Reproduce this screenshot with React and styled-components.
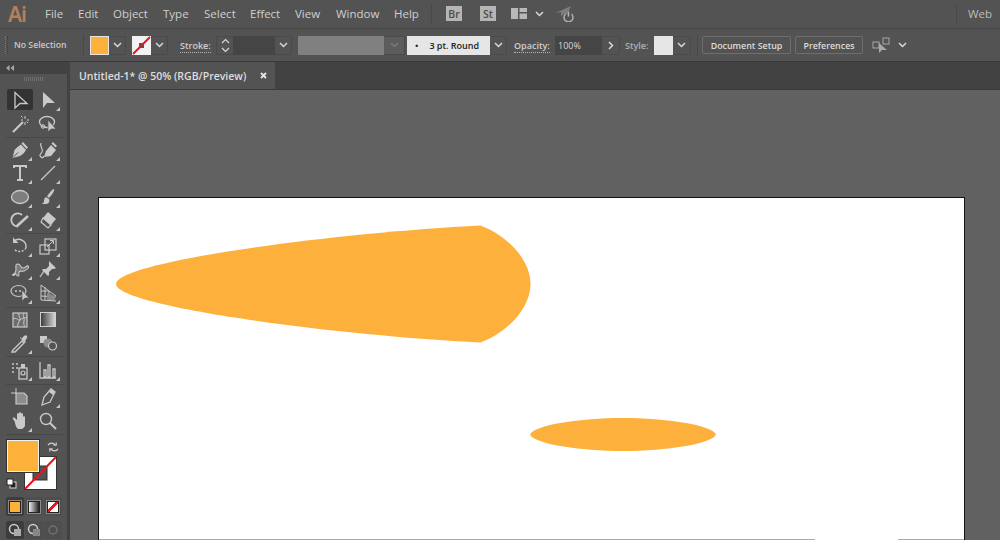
import styled, { createGlobalStyle } from 'styled-components';

const GlobalStyle = createGlobalStyle`
	html, body {
		margin: 0;
		height: 100%;
		overflow: hidden;
		background: #616161;
	}
	* {
		box-sizing: border-box;
	}
`;

const Page = styled.div`
	width: 1000px;
	height: 540px;
	display: flex;
	flex-direction: column;
	overflow: hidden;
	font-family: 'Open Sans', 'Noto Sans', sans-serif;
	color: #d6d6d6;
`;

const MenuBar = styled.div`
	height: 29px;
	flex: none;
	display: flex;
	align-items: center;
	padding-bottom: 1px;
	background: #535353;
	border-bottom: 1px solid #454545;
`;

const Logo = styled.div`
	width: 45px;
	padding-left: 8px;
	font-family: 'Noto Sans', sans-serif;
	font-size: 21px;
	font-weight: 600;
	letter-spacing: -1px;
	color: #b4805a;
`;

const MenuItem = styled.div`
	width: ${(p) => p.$w}px;
	font-size: 11.5px;
	color: #cfcfcf;
`;

const MenuSep = styled.div`
	width: 1px;
	height: 20px;
	background: #484848;
	margin: 0 ${(p) => p.$right}px 0 ${(p) => p.$left}px;
`;

const Badge = styled.div`
	width: 16px;
	height: 15px;
	margin-right: ${(p) => p.$mr}px;
	display: flex;
	align-items: center;
	justify-content: center;
	background: #b5b5b5;
	color: #4c4c4c;
	font-size: 10.5px;
	font-weight: 600;
`;

const Gap = styled.span`
	width: ${(p) => p.$w}px;
	flex: none;
`;

const Spacer = styled.div`
	flex: 1;
`;

const WebLabel = styled.div`
	width: 43px;
	padding-left: 11px;
	font-size: 11.5px;
	color: #bdbdbd;
`;

const ControlBar = styled.div`
	height: 33px;
	flex: none;
	display: flex;
	align-items: center;
	background: #535353;
	border-bottom: 1px solid #3a3a3a;
`;

const Grip = styled.div`
	width: 3px;
	height: 18px;
	margin: 0 6px 0 5px;
	border-left: 1px dotted #777;
	border-right: 1px dotted #3d3d3d;
`;

const NoSelection = styled.div`
	width: 69px;
	font-size: 8.7px;
	font-weight: 600;
	color: #c8c8c8;
`;

const BarSep = styled.div`
	width: 1px;
	height: 22px;
	background: #484848;
	margin: 0 ${(p) => p.$right}px 0 ${(p) => p.$left}px;
`;

const Swatch = styled.div`
	width: 19px;
	height: 19px;
	flex: none;
	border: 1px solid #e6e6e6;
	background: ${(p) => p.$color};
`;

const ChevronBox = styled.div`
	width: ${(p) => p.$w || 17}px;
	height: 19px;
	flex: none;
	display: flex;
	align-items: center;
	justify-content: center;
	border: 1px solid #4a4a4a;
	border-left: none;
	border-radius: 0 2px 2px 0;
	background: ${(p) => p.$bg || '#535353'};
	margin-right: ${(p) => p.$mr || 0}px;
`;

const Label = styled.div`
	width: ${(p) => p.$w}px;
	margin-left: ${(p) => p.$ml}px;
	font-size: 9px;
	font-weight: 600;
	color: ${(p) => (p.$dim ? '#b0b0b0' : '#d0d0d0')};
	span {
		border-bottom: ${(p) => (p.$dim ? 'none' : '1px dotted #b5b5b5')};
	}
`;

const Spinner = styled.div`
	width: 17px;
	height: 19px;
	flex: none;
	display: flex;
	align-items: center;
	justify-content: center;
	border: 1px solid #4a4a4a;
	border-right: none;
`;

const DarkField = styled.div`
	width: ${(p) => p.$w}px;
	height: 19px;
	flex: none;
	padding-left: 3px;
	display: flex;
	align-items: center;
	background: #454545;
	font-size: 9px;
	color: #d8d8d8;
`;

const GrayBar = styled.div`
	width: 86px;
	height: 19px;
	flex: none;
	margin-left: 6px;
	background: #808080;
`;

const BrushField = styled.div`
	width: 83px;
	height: 19px;
	flex: none;
	display: flex;
	align-items: center;
	background: #e6e6e6;
	color: #222;
	font-size: 9px;
	font-weight: 600;
	padding-left: 8px;
	gap: 11px;
`;

const BarButton = styled.div`
	height: 18px;
	width: ${(p) => p.$w}px;
	margin-right: 4px;
	flex: none;
	display: flex;
	align-items: center;
	justify-content: center;
	border: 1px solid #6e6e6e;
	border-radius: 2px;
	font-size: 8.9px;
	font-weight: 600;
	color: #dcdcdc;
`;

const Workspace = styled.div`
	flex: 1;
	display: flex;
	min-height: 0;
`;

const ToolPanel = styled.div`
	width: 70px;
	flex: none;
	display: flex;
	flex-direction: column;
	background: #535353;
	border-right: 3px solid #424242;
`;

const PanelHead = styled.div`
	height: 12px;
	flex: none;
	padding-left: 6px;
	display: flex;
	align-items: center;
	background: #424242;
`;

const PanelGrip = styled.div`
	width: 20px;
	height: 4px;
	flex: none;
	margin: 3px 0 7px 24px;
	background: repeating-linear-gradient(90deg, #6f6f6f 0 1px, transparent 1px 2px);
`;

const ToolGroup = styled.div`
	display: grid;
	grid-template-columns: 28px 28px;
	grid-auto-rows: ${(p) => p.$row}px;
	width: 57px;
	margin-left: 6px;
	padding-bottom: ${(p) => p.$pb}px;
	border-bottom: 1px solid #484848;
	flex: none;
`;

const ToolCell = styled.div`
	position: relative;
	display: flex;
	align-items: center;
	justify-content: center;
	border-radius: 2px;
	margin: ${(p) => (p.$active ? '1px 1px 2px' : '0')};
	background: ${(p) => (p.$active ? '#333' : 'transparent')};
	&::after {
		content: '';
		display: ${(p) => (p.$more ? 'block' : 'none')};
		position: absolute;
		right: 2px;
		bottom: 1px;
		border-style: solid;
		border-width: 0 0 4px 4px;
		border-color: transparent transparent #c4c4c4 transparent;
	}
`;

const ColorWell = styled.div`
	position: relative;
	height: 57px;
	flex: none;
	margin-top: 5px;
`;

const FillSquare = styled.div`
	position: absolute;
	left: 7px;
	top: 0;
	width: 32px;
	height: 32px;
	background: #fcb13b;
	border: 1px solid #f0f0f0;
	box-shadow: 0 0 0 1px #333;
	z-index: 1;
`;

const StrokeSquare = styled.svg`
	position: absolute;
	left: 24px;
	top: 16px;
`;

const WellIcon = styled.svg`
	position: absolute;
	left: ${(p) => p.$x}px;
	top: ${(p) => p.$y}px;
`;

const ModeRow = styled.div`
	display: flex;
	flex: none;
	margin: 0 0 5px 6px;
	gap: 1px;
`;

const ModeCell = styled.div`
	width: 18px;
	height: ${(p) => p.$h || 19}px;
	display: flex;
	align-items: center;
	justify-content: center;
	border-radius: 2px;
	background: ${(p) => (p.$active ? '#3c3c3c' : '#4e4e4e')};
`;

const ModeSwatch = styled.div`
	width: 12px;
	height: 12px;
	border: 1px solid #222;
	outline: 1px solid #8a8a8a;
	background: ${(p) => p.$bg};
`;

const Main = styled.div`
	flex: 1;
	display: flex;
	flex-direction: column;
	min-width: 0;
`;

const TabStrip = styled.div`
	height: 28px;
	flex: none;
	display: flex;
	background: #424242;
	border-bottom: 1px solid #3a3a3a;
`;

const Tab = styled.div`
	width: 205px;
	display: flex;
	align-items: center;
	justify-content: space-between;
	padding: 0 8px 0 9px;
	background: #535353;
	font-size: 10.5px;
	font-weight: 600;
	color: #dedede;
`;

const Canvas = styled.div`
	flex: 1;
	padding: 107px 0 0 28px;
	background: #616161;
	min-height: 0;
`;

const Artboard = styled.div`
	width: 867px;
	height: 344px;
	background: #fff;
	border: 1px solid #111;
	border-bottom: none;
`;

const ArtSvg = styled.svg`
	display: block;
`;

const Chevron = ({ color = '#d8d8d8' }) => (
	<svg width="9" height="6" viewBox="0 0 9 6">
		<path d="M1 1l3.5 3.5L8 1" fill="none" stroke={color} strokeWidth="1.5" />
	</svg>
);

const NoneSwatch = () => (
	<svg width="19" height="19" viewBox="0 0 19 19">
		<rect width="19" height="19" fill="#f2f2f2" />
		<rect x="7" y="7" width="5" height="5" fill="#555" />
		<path d="M1 18L18 1" stroke="#e8141c" strokeWidth="2" />
	</svg>
);

const tools = {
	select: <path d="M5 2.5V18l5-4.5h7z" fill="none" strokeWidth="1.3" />,
	direct: <path d="M5 2v16l4-5h8z" fill="currentColor" stroke="none" />,
	wand: (
		<>
			<path d="M3 18L13 8" strokeWidth="2.2" />
			<path d="M15 2v3M15 8v3M11 6h2M17 6h2M11 2l1.5 1.5M18 9l-1.5-1.5" strokeWidth="1" />
		</>
	),
	lasso: (
		<>
			<ellipse cx="9" cy="8" rx="7.5" ry="5.5" fill="none" strokeWidth="1.3" />
			<circle cx="5" cy="12.5" r="1.8" fill="none" strokeWidth="1" />
			<path d="M10 6v12l3-3h5z" fill="currentColor" stroke="#535353" strokeWidth=".7" />
		</>
	),
	pen: (
		<>
			<path d="M2.5 18l2-8c2-2 4-4 6.500-5.500l5 5.500C14.500 12.500 12.500 14.500 10 16z" fill="currentColor" stroke="none" />
			<path d="M13 2l5 5.500-1.500 1.500-5-5.500z" fill="currentColor" stroke="none" />
			<path d="M3 17.500l5-5" stroke="#535353" strokeWidth="1" />
		</>
	),
	curvature: (
		<>
			<path d="M6 17l2-6 5-6 5 5-5 6z" fill="currentColor" stroke="none" />
			<path d="M15 2l4 4-1.500 1.500-4-4z" fill="currentColor" stroke="none" />
			<path d="M3 3c-2 3 3 6 1 9s-3 3-1 5 3-1 3-1" fill="none" strokeWidth="1.2" />
		</>
	),
	type: <path d="M4 5V3h12v2M10 3v14M7 17h6" fill="none" strokeWidth="2" />,
	line: <path d="M3 17L17 3" strokeWidth="1.3" />,
	ellipse: <ellipse cx="10" cy="10" rx="8.5" ry="6.5" fill="#7e7e7e" strokeWidth="1.3" />,
	brush: (
		<>
			<path d="M16 2c1 2-3 7-5 9l-2-2c2-2 5-7 7-7z" fill="currentColor" stroke="none" />
			<path d="M8 10c-2 1-2 3-2 5l-2 2h4c3 0 4-3 3-5z" fill="currentColor" stroke="none" />
		</>
	),
	shaper: (
		<>
			<path d="M12 5A6.5 6.5 0 1 0 8 16.5" fill="none" strokeWidth="1.8" />
			<path d="M7 16L18 6" strokeWidth="2.5" />
		</>
	),
	eraser: (
		<>
			<path d="M10 2l8 7-5 6-8-7z" fill="currentColor" stroke="none" />
			<path d="M5 8l8 7-3 3-7-6z" fill="none" strokeWidth="1.2" />
		</>
	),
	rotate: (
		<>
			<path d="M4 5a7.500 7.500 0 0 1 12 7" fill="none" strokeWidth="1.4" />
			<path d="M16 12a7.500 7.500 0 0 1-12 1" fill="none" strokeWidth="1.4" strokeDasharray="2 1.500" />
			<path d="M3 1.500V7h5.500z" fill="currentColor" stroke="none" />
		</>
	),
	scale: (
		<>
			<rect x="2" y="9" width="9" height="9" fill="none" strokeWidth="1.2" />
			<rect x="7" y="3" width="11" height="11" fill="none" strokeWidth="1.2" />
			<path d="M9 11l6-6M12 4.5h3.5V8" fill="none" strokeWidth="1" />
		</>
	),
	warp: (
		<path d="M2 16c3-1 4-3 4-6S5 5 8 5s2 4 5 4 3-3 5-2-1 4-4 5-4-1-5 1 1 4-1 4-2-3-3-2-1 2-2 1z" fill="#7a7a7a" strokeWidth="1.1" />
	),
	pin: (
		<>
			<path d="M11 2l7 7-2 1-2 0-3 3 0 3-1 1-6-6 1-1 3 0 3-3 0-2z" fill="currentColor" stroke="none" />
			<path d="M6 12l-4 6" strokeWidth="1.3" />
		</>
	),
	shape: (
		<>
			<ellipse cx="8.5" cy="8" rx="7.5" ry="5.5" fill="none" strokeWidth="1.2" />
			<circle cx="6" cy="8" r="1" fill="currentColor" stroke="none" />
			<circle cx="10" cy="8" r="1" fill="currentColor" stroke="none" />
			<path d="M12 7v11l3-3h4z" fill="currentColor" stroke="#535353" strokeWidth=".7" />
		</>
	),
	perspective: (
		<>
			<path d="M3 2v15l15 1M3 2l8 6 7 5M3 8h8v7M3 13l15 1M7 4v13" fill="none" strokeWidth="1" />
			<path d="M9 10l8 3v4H9z" fill="#8a8a8a" stroke="none" />
		</>
	),
	mesh: (
		<>
			<rect x="3" y="3" width="14" height="14" fill="#6d6d6d" strokeWidth="1.2" />
			<path d="M3 9c4-2 5 2 7 1s4-3 7-2M9 3c-1 4 2 5 1 7s-3 4-2 7M14 3c-2 4 1 5 0 8s1 4 0 6" fill="none" strokeWidth="1" />
		</>
	),
	gradient: null,
	eyedropper: (
		<>
			<path d="M3 17l9-9 2 2-9 9-3 0z" fill="none" strokeWidth="1.4" />
			<path d="M11 6l3-3c2-2 4 0 3 2l-2 3 1 1-1 1-5-5 1-1z" fill="currentColor" stroke="none" />
		</>
	),
	blend: (
		<>
			<rect x="2" y="3" width="7" height="7" fill="currentColor" stroke="none" />
			<circle cx="10" cy="10" r="4.5" fill="#8c8c8c" stroke="none" />
			<circle cx="14.5" cy="13" r="4" fill="#535353" strokeWidth="1.2" />
		</>
	),
	spray: (
		<>
			<rect x="9" y="8" width="8" height="11" fill="none" strokeWidth="1.3" />
			<rect x="11" y="4" width="4" height="4" fill="currentColor" stroke="none" />
			<circle cx="13" cy="13" r="2" fill="none" strokeWidth="1.2" />
			<path d="M2 4h2M6 4h2M2 8h2M6 8h2M2 12h2" strokeWidth="1.5" />
		</>
	),
	graph: <path d="M2 2v16h16M6 17v-7M6 17h2v-7H6zM10 17V5h2v12zM15 17V9h2v8z" fill="none" strokeWidth="1.3" />,
	artboard: (
		<>
			<path d="M6 1v5M1 6h5" strokeWidth="1" />
			<path d="M6 6h8l3 3v8H6z" fill="#8c8c8c" strokeWidth="1.2" />
		</>
	),
	slice: (
		<>
			<path d="M4 18l2-8 7-8 4 3-5 10z" fill="none" strokeWidth="1.3" />
			<path d="M13 2l4 3-2 3-4-3z" fill="currentColor" stroke="none" />
		</>
	),
	hand: (
		<path d="M5 11L3 8c-1-1 1-2 2-1l2 2V3c0-1 2-1 2 0v5V2c0-1 2-1 2 0v6-5c0-1 2-1 2 0v6-3c0-1 2-1 2 0v8c0 2-2 4-4 4H9c-2 0-3-2-4-6z" fill="currentColor" stroke="none" />
	),
	zoom: (
		<>
			<circle cx="8" cy="8" r="5.5" fill="none" strokeWidth="1.4" />
			<path d="M12 12l6 6" strokeWidth="2" />
		</>
	),
};

const Gradient = styled.div`
	width: 16px;
	height: 15px;
	border: 1px solid #cfcfcf;
	background: linear-gradient(90deg, #3d3d3d, #d5d5d5);
`;

const Tool = ({ name, more, active }) => (
	<ToolCell $more={more} $active={active}>
		{name === 'gradient' ? (
			<Gradient />
		) : (
			<svg width="20" height="20" viewBox="0 0 20 20" stroke="currentColor" color="#c9c9c9">
				{tools[name]}
			</svg>
		)}
	</ToolCell>
);

const toolGroups = [
	{ row: 24, pb: 1, tools: [['select', false, true], ['direct', true], ['wand'], ['lasso']] },
	{
		row: 23.5,
		pb: 1,
		tools: [['pen', true], ['curvature', true], ['type', true], ['line', true], ['ellipse', true], ['brush', true], ['shaper', true], ['eraser', true]],
	},
	{ row: 23.5, pb: 2.5, tools: [['rotate', true], ['scale', true], ['warp', true], ['pin', true], ['shape', true], ['perspective', true]] },
	{ row: 23.5, pb: 1, tools: [['mesh'], ['gradient'], ['eyedropper', true], ['blend']] },
	{ row: 25, pb: 2, tools: [['spray', true], ['graph', true]] },
	{ row: 24, pb: 1, tools: [['artboard'], ['slice', true], ['hand', true], ['zoom']] },
];

const menus = [
	['File', 33],
	['Edit', 35],
	['Object', 50],
	['Type', 41],
	['Select', 46],
	['Effect', 45],
	['View', 41],
	['Window', 58],
	['Help', 37],
];

export default function App() {
	return (
		<Page>
			<GlobalStyle />
			<MenuBar>
				<Logo>Ai</Logo>
				{menus.map(([name, w]) => (
					<MenuItem key={name} $w={w}>
						{name}
					</MenuItem>
				))}
				<MenuSep $left={0} $right={14} />
				<Badge $mr={18}>Br</Badge>
				<Badge $mr={15}>St</Badge>
				<svg width="16" height="11" viewBox="0 0 16 11">
					<rect width="7" height="11" fill="#b8b8b8" />
					<rect x="8.5" width="7.5" height="4" fill="#b8b8b8" />
					<rect x="8.5" y="5.5" width="7.5" height="5.5" fill="#b8b8b8" />
				</svg>
				<Gap $w={8} />
				<Chevron />
				<Gap $w={11} />
				<svg width="21" height="16" viewBox="0 0 21 16">
					<path d="M0 7L16 0l-4 9-3-1.5-3 3V6z" fill="#7d7d7d" />
					<path d="M10.5 8a4.5 4.5 0 1 0 6 0" fill="none" stroke="#b5b5b5" strokeWidth="1.4" />
					<path d="M13.5 5.500v5" stroke="#b5b5b5" strokeWidth="1.4" />
				</svg>
				<Spacer />
				<MenuSep $left={0} $right={0} />
				<WebLabel>Web</WebLabel>
			</MenuBar>
			<ControlBar>
				<Grip />
				<NoSelection>No Selection</NoSelection>
				<BarSep $left={0} $right={6} />
				<Swatch $color="#fcb13b" />
				<ChevronBox>
					<Chevron />
				</ChevronBox>
				<Gap $w={6} />
				<NoneSwatch />
				<ChevronBox>
					<Chevron />
				</ChevronBox>
				<Label $ml={12} $w={36}>
					<span>Stroke:</span>
				</Label>
				<Spinner>
					<svg width="9" height="15" viewBox="0 0 9 15">
						<path d="M1 5l3.5-3.5L8 5M1 10l3.5 3.5L8 10" fill="none" stroke="#d8d8d8" strokeWidth="1.2" />
					</svg>
				</Spinner>
				<DarkField $w={42} />
				<ChevronBox>
					<Chevron />
				</ChevronBox>
				<GrayBar />
				<ChevronBox $w={21} $bg="#5c5c5c" $mr={2}>
					<Chevron color="#777" />
				</ChevronBox>
				<BrushField>
					<span>•</span>
					<span>3 pt. Round</span>
				</BrushField>
				<ChevronBox>
					<Chevron />
				</ChevronBox>
				<Label $ml={7} $w={41}>
					<span>Opacity:</span>
				</Label>
				<DarkField $w={47}>100%</DarkField>
				<ChevronBox $w={18}>
					<svg width="6" height="9" viewBox="0 0 6 9">
						<path d="M1 1l3.5 3.5L1 8" fill="none" stroke="#d8d8d8" strokeWidth="1.5" />
					</svg>
				</ChevronBox>
				<Label $ml={5} $w={29} $dim>
					Style:
				</Label>
				<Swatch $color="#e6e6e6" />
				<ChevronBox $w={18}>
					<Chevron />
				</ChevronBox>
				<BarSep $left={6} $right={4} />
				<BarButton $w={89}>Document Setup</BarButton>
				<BarButton $w={68}>Preferences</BarButton>
				<Gap $w={5} />
				<svg width="20" height="17" viewBox="0 0 20 17">
					<rect x="1" y="5" width="6" height="6" fill="none" stroke="#a8a8a8" />
					<rect x="11" y="1" width="6" height="6" fill="none" stroke="#a8a8a8" />
					<path d="M7 6v10l3-3h5z" fill="#a8a8a8" />
				</svg>
				<Gap $w={6} />
				<Chevron />
			</ControlBar>
			<Workspace>
				<ToolPanel>
					<PanelHead>
						<svg width="8" height="6" viewBox="0 0 8 6">
							<path d="M3.5 0v6L0 3zM8 0v6L4.5 3z" fill="#a8a8a8" />
						</svg>
					</PanelHead>
					<PanelGrip />
					{toolGroups.map((group, i) => (
						<ToolGroup key={i} $row={group.row} $pb={group.pb}>
							{group.tools.map(([name, more, active]) => (
								<Tool key={name} name={name} more={more} active={active} />
							))}
						</ToolGroup>
					))}
					<ColorWell>
						<FillSquare />
						<StrokeSquare width="33" height="34" viewBox="0 0 33 34">
							<rect x=".5" y=".5" width="32" height="33" fill="#fff" stroke="#333" />
							<rect x="9" y="10" width="14" height="14" fill="#535353" stroke="#333" />
							<path d="M1 33L32 1" stroke="#e8141c" strokeWidth="2" />
						</StrokeSquare>
						<WellIcon $x={47} $y={1} width="12" height="12" viewBox="0 0 13 12">
							<path d="M1 4c2-3 6-3 8 0M7 4h3V1M12 8c-2 3-6 3-8 0M6 8H3v3" fill="none" stroke="#d0d0d0" strokeWidth="1.2" />
						</WellIcon>
						<WellIcon $x={6} $y={38} width="11" height="11" viewBox="0 0 11 11">
							<rect x="4" y="4" width="6" height="6" fill="#222" stroke="#ddd" />
							<rect x="1" y="1" width="6" height="6" fill="#fff" stroke="#222" />
						</WellIcon>
					</ColorWell>
					<ModeRow>
						<ModeCell $active>
							<ModeSwatch $bg="#fcb13b" />
						</ModeCell>
						<ModeCell>
							<ModeSwatch $bg="linear-gradient(90deg, #eee, #222)" />
						</ModeCell>
						<ModeCell>
							<ModeSwatch $bg="linear-gradient(135deg, #fff 40%, #e8141c 40% 60%, #fff 60%)" />
						</ModeCell>
					</ModeRow>
					<ModeRow>
						<ModeCell $active $h={18}>
							<svg width="14" height="14" viewBox="0 0 14 14">
								<circle cx="6" cy="6" r="4.5" fill="none" stroke="#ccc" strokeWidth="1.5" />
								<rect x="6" y="6" width="7" height="7" fill="#aaa" />
							</svg>
						</ModeCell>
						<ModeCell $h={18}>
							<svg width="14" height="14" viewBox="0 0 14 14">
								<circle cx="6" cy="6" r="4.5" fill="none" stroke="#ccc" strokeWidth="1.5" />
								<rect x="6" y="6" width="7" height="7" fill="#888" />
							</svg>
						</ModeCell>
						<ModeCell $h={18}>
							<svg width="14" height="14" viewBox="0 0 14 14">
								<circle cx="7" cy="7" r="4" fill="none" stroke="#707070" strokeWidth="1.5" />
							</svg>
						</ModeCell>
					</ModeRow>
				</ToolPanel>
				<Main>
					<TabStrip>
						<Tab>
							<span>Untitled-1* @ 50% (RGB/Preview)</span>
							<svg width="7" height="7" viewBox="0 0 7 7">
								<path d="M1 1l5 5M6 1L1 6" stroke="#e6e6e6" strokeWidth="1.8" />
							</svg>
						</Tab>
					</TabStrip>
					<Canvas>
						<Artboard>
							{/* page coords shifted by the artboard corner */}
							<ArtSvg width="865" height="343" viewBox="99 198 865 343">
								<path
									d="M116 284C116 262 330 233 480.5 225.5C508 236 530.5 260 530.5 284C530.5 308 508 332 480.5 342.5C330 335 116 306 116 284Z"
									fill="#fdb13c"
								/>
								<path
									d="M530 434.5C534 425 580 418 623 418C666 418 712 425 716 434.5C712 444 666 451 623 451C580 451 534 444 530 434.5Z"
									fill="#fdb13c"
								/>
								<path d="M99 539.5H815M898 539.5H964" stroke="#aaa" strokeWidth="1" />
							</ArtSvg>
						</Artboard>
					</Canvas>
				</Main>
			</Workspace>
		</Page>
	);
}
